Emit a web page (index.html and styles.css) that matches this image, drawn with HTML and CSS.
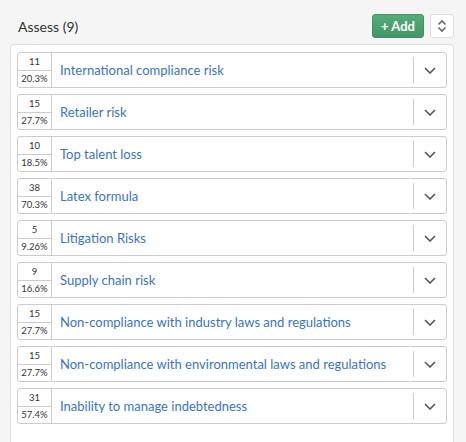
FILE: index.html
```html
<!DOCTYPE html>
<html>
<head>
<meta charset="utf-8">
<link rel="stylesheet" href="styles.css">
</head>
<body>
<div class="header">
  <h2 class="title">Assess (9)</h2>
  <div class="actions">
    <button class="btn-add">+ Add</button>
    <button class="btn-sort">
      <svg width="10" height="14" viewBox="0 0 10 14"><path d="M1.5 5.5 L5 2 L8.5 5.5 M1.5 8.5 L5 12 L8.5 8.5" fill="none" stroke="#666" stroke-width="1.6"/></svg>
    </button>
  </div>
</div>
<div class="panel">
  <div class="row"><div class="count"><span class="n">11</span><span class="p">20.3%</span></div><div class="name">International compliance risk</div><div class="toggle"><svg width="12" height="7" viewBox="0 0 12 7"><path d="M1 1 L6 6 L11 1" fill="none" stroke="#555" stroke-width="1.6"/></svg></div></div>
  <div class="row"><div class="count"><span class="n">15</span><span class="p">27.7%</span></div><div class="name">Retailer risk</div><div class="toggle"><svg width="12" height="7" viewBox="0 0 12 7"><path d="M1 1 L6 6 L11 1" fill="none" stroke="#555" stroke-width="1.6"/></svg></div></div>
  <div class="row"><div class="count"><span class="n">10</span><span class="p">18.5%</span></div><div class="name">Top talent loss</div><div class="toggle"><svg width="12" height="7" viewBox="0 0 12 7"><path d="M1 1 L6 6 L11 1" fill="none" stroke="#555" stroke-width="1.6"/></svg></div></div>
  <div class="row"><div class="count"><span class="n">38</span><span class="p">70.3%</span></div><div class="name">Latex formula</div><div class="toggle"><svg width="12" height="7" viewBox="0 0 12 7"><path d="M1 1 L6 6 L11 1" fill="none" stroke="#555" stroke-width="1.6"/></svg></div></div>
  <div class="row"><div class="count"><span class="n">5</span><span class="p">9.26%</span></div><div class="name">Litigation Risks</div><div class="toggle"><svg width="12" height="7" viewBox="0 0 12 7"><path d="M1 1 L6 6 L11 1" fill="none" stroke="#555" stroke-width="1.6"/></svg></div></div>
  <div class="row"><div class="count"><span class="n">9</span><span class="p">16.6%</span></div><div class="name">Supply chain risk</div><div class="toggle"><svg width="12" height="7" viewBox="0 0 12 7"><path d="M1 1 L6 6 L11 1" fill="none" stroke="#555" stroke-width="1.6"/></svg></div></div>
  <div class="row"><div class="count"><span class="n">15</span><span class="p">27.7%</span></div><div class="name">Non-compliance with industry laws and regulations</div><div class="toggle"><svg width="12" height="7" viewBox="0 0 12 7"><path d="M1 1 L6 6 L11 1" fill="none" stroke="#555" stroke-width="1.6"/></svg></div></div>
  <div class="row"><div class="count"><span class="n">15</span><span class="p">27.7%</span></div><div class="name">Non-compliance with environmental laws and regulations</div><div class="toggle"><svg width="12" height="7" viewBox="0 0 12 7"><path d="M1 1 L6 6 L11 1" fill="none" stroke="#555" stroke-width="1.6"/></svg></div></div>
  <div class="row"><div class="count"><span class="n">31</span><span class="p">57.4%</span></div><div class="name">Inability to manage indebtedness</div><div class="toggle"><svg width="12" height="7" viewBox="0 0 12 7"><path d="M1 1 L6 6 L11 1" fill="none" stroke="#555" stroke-width="1.6"/></svg></div></div>
</div>
</body>
</html>
```
FILE: styles.css
```css
html, body { margin: 0; padding: 0; }
body {
  background: #f5f5f5;
  font-family: Lato, "Open Sans", sans-serif;
  width: 466px;
  height: 442px;
  overflow: hidden;
}
.header {
  display: flex;
  align-items: center;
  justify-content: space-between;
  padding: 14px 12px 0 18px;
  height: 24px;
}
.title {
  margin: 0;
  font-size: 14px;
  font-weight: 400;
  color: #333;
}
.actions { display: flex; gap: 6px; }
.btn-add {
  width: 52px;
  height: 24px;
  border: 1px solid #3f9363;
  border-radius: 3px;
  background: linear-gradient(#55ab7a, #409665);
  color: #fff;
  font-family: Lato, sans-serif;
  font-weight: 700;
  font-size: 13px;
  padding: 0;
}
.btn-sort {
  width: 24px;
  height: 24px;
  border: 1px solid #ddd;
  border-radius: 3px;
  background: #fff;
  padding: 0;
  display: flex;
  align-items: center;
  justify-content: center;
}
.panel {
  margin: 6px 12px 0 10px;
  background: #fff;
  border: 1px solid #ddd;
  border-radius: 3px;
  padding: 7px 6px 20px 6px;
  display: flex;
  flex-direction: column;
  gap: 6px;
}
.row {
  display: flex;
  height: 34px;
  border: 1px solid #ccc;
  border-radius: 3px;
  background: #fff;
}
.count {
  width: 33px;
  border-right: 1px solid #ccc;
  display: flex;
  flex-direction: column;
  color: #333;
}
.count .n, .count .p {
  flex: 1;
  display: flex;
  align-items: center;
  justify-content: center;
  font-size: 9.5px;
}
.count .n { border-bottom: 1px solid #ccc; }
.name {
  flex: 1;
  display: flex;
  align-items: center;
  padding-left: 8px;
  font-size: 13px;
  color: #3a74bd;
}
.toggle {
  width: 32px;
  margin: 4px 0;
  border-left: 1px solid #ccc;
  display: flex;
  align-items: center;
  justify-content: center;
}
```
